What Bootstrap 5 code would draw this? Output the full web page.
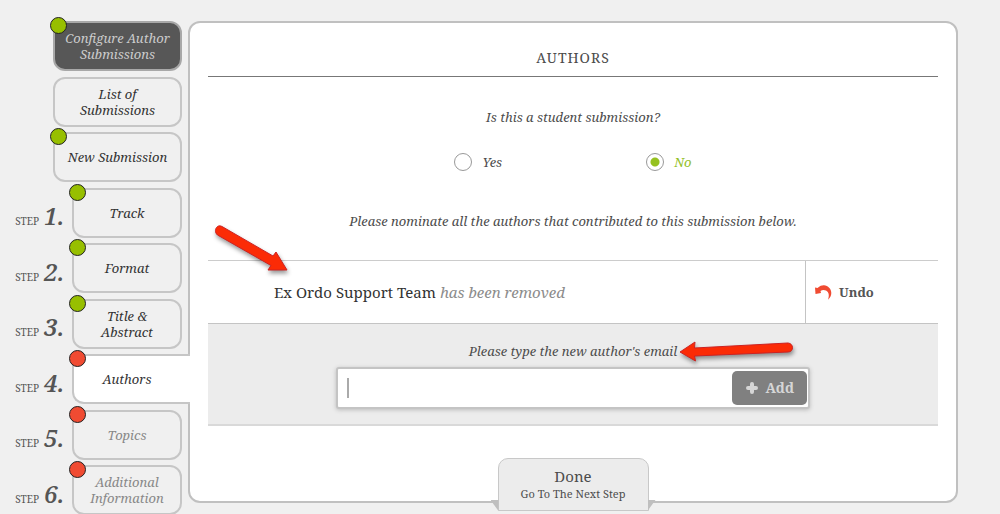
<!DOCTYPE html>
<html lang="en">
<head>
<meta charset="utf-8">
<meta name="viewport" content="width=device-width, initial-scale=1">
<title>Author Submissions – Authors</title>
<link href="https://cdn.jsdelivr.net/npm/bootstrap@5.3.0/dist/css/bootstrap.min.css" rel="stylesheet">
<style>
  html { scrollbar-width: none; }
  body { background: #f0f0f0; color: #4c4c4c; font-family: "Droid Serif", "Noto Serif", "Liberation Serif", serif; font-size: 13px; line-height: 16px; }
  .page-top { padding-top: 21px; }
  .steps-side { width: 188px; flex: none; }
  .steps-list { min-height: 494px; padding-right: 6px; }
  .step-tab { position: relative; display: flex; align-items: center; justify-content: center; text-align: center; width: 110px; height: 50px; padding: 0 8px; border: 2px solid #c6c6c6; border-radius: 12px; color: #333; font-style: italic; text-decoration: none; }
  .step-tab.wide { width: 129px; }
  .step-tab.filled { background: #575757; border-color: #a8a8a8; color: #ccc; }
  .step-tab.muted { color: #888; }
  .step-tab.current { width: 118px; margin-right: -8px; padding-right: 18px; background: #fff; border-right: 0; border-radius: 12px 0 0 12px; z-index: 2; }
  .dot { position: absolute; left: -5px; top: -6px; width: 17px; height: 17px; border: 1px solid #222; border-radius: 50%; background: #97bf00; }
  .dot.todo { background: #f04b32; }
  .step-label { gap: 5px; color: #555; }
  .step-word { font-size: 10px; text-transform: uppercase; }
  .step-num { font-size: 24px; line-height: 24px; font-style: italic; font-weight: 600; width: 28px; }
  .panel { border: 2px solid #c0c0c0; border-radius: 12px; background: #fff; padding: 0 18px; margin-right: 42px; }
  .panel-title { font-size: 14px; line-height: 18px; letter-spacing: 1px; padding: 26px 0 9px; border-bottom: 1px solid #777; margin: 0; font-weight: 400; }
  .answers { gap: 144px; }
  .answer { gap: 10px; }
  .answer input { appearance: none; width: 18px; height: 18px; margin: 0; border: 1px solid #999; border-radius: 50%; background: #fff; }
  .answer input:checked { background: radial-gradient(circle, #95c11f 0 4px, #fff 5px); }
  .answer input:checked + label { color: #95bf2a; }
  .intro { margin: 42px 0 31px; }
  .author-row { border-top: 1px solid #ccc; border-bottom: 1px solid #c4c4c4; height: 64px; }
  .author-name { padding-left: 66px; font-size: 15px; line-height: 20px; color: #333; }
  .author-name em { color: #8c8c8c; }
  .undo-cell { width: 133px; border-left: 1px solid #c4c4c4; padding-left: 9px; }
  .undo-btn { background: none; border: 0; padding: 0; font-weight: 700; color: #555; gap: 7px; }
  .new-author { background: #ececec; border-bottom: 2px solid #d9d9d9; padding: 19px 0 15px; }
  .email-box { width: 65%; height: 42px; border: 2px solid #c4c4c4; border-radius: 3px; background: #fff; box-shadow: 0 1px 4px #bbb; padding: 2px 1px; }
  .email-box input { border: 0; outline: 0; background: none; padding: 0 8px; caret-color: transparent; }
  .caret { width: 2px; height: 20px; background: #aaa; margin-left: 8px; }
  .add-btn { width: 75px; height: 34px; border: 0; border-radius: 5px; background: #808080; color: #d6d6d6; font-size: 14px; gap: 8px; }
  .done-btn { position: relative; width: 151px; height: 53px; margin: 32px 0 -12px; border: 1px solid #c8c8c8; border-radius: 10px 10px 0 0; background: #ececec; color: #4c4c4c; font-size: 11px; padding: 0 0 2px; }
  .done-btn span { font-size: 15px; line-height: 20px; }
  .done-btn::before, .done-btn::after { content: ""; position: absolute; bottom: -1px; width: 8px; height: 11px; background: #bfbfbf; }
  .done-btn::before { right: 100%; clip-path: polygon(0 0, 100% 0, 100% 100%); }
  .done-btn::after { left: 100%; clip-path: polygon(0 0, 100% 0, 0 100%); }
  .pointer { position: absolute; pointer-events: none; filter: drop-shadow(1px 3px 2px rgba(0,0,0,.4)); overflow: visible; }
  .pointer-row { left: 6px; top: -37px; }
  .pointer-mail { left: 100%; top: -2px; margin-left: 2px; }
</style>
</head>
<body>
<div class="d-flex align-items-start page-top">
  <nav class="steps-side" aria-label="Submission steps">
    <ul class="steps-list list-unstyled d-flex flex-column justify-content-between align-items-end m-0">
      <li><a class="step-tab wide filled" href="#"><i class="dot"></i>Configure Author Submissions</a></li>
      <li><a class="step-tab wide" href="#">List of<br>Submissions</a></li>
      <li><a class="step-tab wide" href="#"><i class="dot"></i>New Submission</a></li>
      <li class="d-flex align-items-center"><span class="step-label d-flex align-items-baseline pt-2"><span class="step-word">Step</span><span class="step-num">1.</span></span><a class="step-tab" href="#"><i class="dot"></i>Track</a></li>
      <li class="d-flex align-items-center"><span class="step-label d-flex align-items-baseline pt-2"><span class="step-word">Step</span><span class="step-num">2.</span></span><a class="step-tab" href="#"><i class="dot"></i>Format</a></li>
      <li class="d-flex align-items-center"><span class="step-label d-flex align-items-baseline pt-2"><span class="step-word">Step</span><span class="step-num">3.</span></span><a class="step-tab" href="#"><i class="dot"></i>Title &amp;<br>Abstract</a></li>
      <li class="d-flex align-items-center"><span class="step-label d-flex align-items-baseline pt-2"><span class="step-word">Step</span><span class="step-num">4.</span></span><a class="step-tab current" href="#" aria-current="step"><i class="dot todo"></i>Authors</a></li>
      <li class="d-flex align-items-center"><span class="step-label d-flex align-items-baseline pt-2"><span class="step-word">Step</span><span class="step-num">5.</span></span><a class="step-tab muted" href="#"><i class="dot todo"></i>Topics</a></li>
      <li class="d-flex align-items-center"><span class="step-label d-flex align-items-baseline pt-2"><span class="step-word">Step</span><span class="step-num">6.</span></span><a class="step-tab muted" href="#"><i class="dot todo"></i>Additional Information</a></li>
    </ul>
  </nav>
  <main class="panel flex-grow-1 text-center">
    <h1 class="panel-title">AUTHORS</h1>
    <form>
      <fieldset>
        <p class="fst-italic mb-0 pt-4 mt-2" id="student-q">Is this a student submission?</p>
        <div class="answers d-flex justify-content-center mt-4 pt-1 fst-italic" role="radiogroup" aria-labelledby="student-q">
          <div class="answer d-flex align-items-center"><input type="radio" name="student" id="st-yes"><label for="st-yes">Yes</label></div>
          <div class="answer d-flex align-items-center"><input type="radio" name="student" id="st-no" checked><label for="st-no">No</label></div>
        </div>
      </fieldset>
      <p class="fst-italic intro">Please nominate all the authors that contributed to this submission below.</p>
      <div class="author-row d-flex position-relative">
        <div class="author-name flex-grow-1 text-start align-self-center">Ex Ordo Support Team <em>has been removed</em></div>
        <div class="undo-cell d-flex align-items-center">
          <button type="button" class="undo-btn d-flex align-items-center">
            <svg width="17" height="15" viewBox="0 0 17 15" aria-hidden="true"><path d="M0 2.500 2.500 3C5 .8 7 .2 9 .3 13 .6 16.300 4 16.300 8 16.300 11 15 13 13 14.700 14.500 10.500 14 7 11 5.500 9 4.600 7 4.900 5.500 6L6 8 .5 9Z" fill="#f04b32"/></svg>Undo</button>
        </div>
        <svg class="pointer pointer-row" width="76" height="50" viewBox="0 0 76 50" aria-hidden="true"><path d="M8 2.500 59 32 62 28 73 46 54 46 57 41.500 3.500 11C.5 8.500 1 4.500 3.500 2.500 5 1.500 6.500 1.700 8 2.500Z" fill="#fb2b06" stroke="#c22" stroke-width="1"/></svg>
      </div>
      <div class="new-author d-flex flex-column align-items-center">
        <label class="fst-italic position-relative mb-2" for="mail">Please type the new author's email
          <svg class="pointer pointer-mail" width="116" height="24" viewBox="0 0 116 24" aria-hidden="true"><path d="M1 11 16 1 15.500 7 109 2C115 2.500 115 11 109 11L15.500 15 16.500 20Z" fill="#fb2b06" stroke="#c22" stroke-width="1"/></svg></label>
        <div class="email-box d-flex align-items-center">
          <span class="caret"></span><input class="flex-grow-1" type="email" id="mail">
          <button type="button" class="add-btn d-flex align-items-center justify-content-center fw-bold"><svg width="12" height="12" viewBox="0 0 12 12" aria-hidden="true"><path d="M6 2V10M2 6H10" stroke="#d6d6d6" stroke-width="4" stroke-linecap="round"/></svg>Add</button>
        </div>
      </div>
      <button type="submit" class="done-btn"><span>Done</span><br>Go To The Next Step</button>
    </form>
  </main>
</div>
<script src="https://cdn.jsdelivr.net/npm/bootstrap@5.3.0/dist/js/bootstrap.bundle.min.js"></script>
</body>
</html>
